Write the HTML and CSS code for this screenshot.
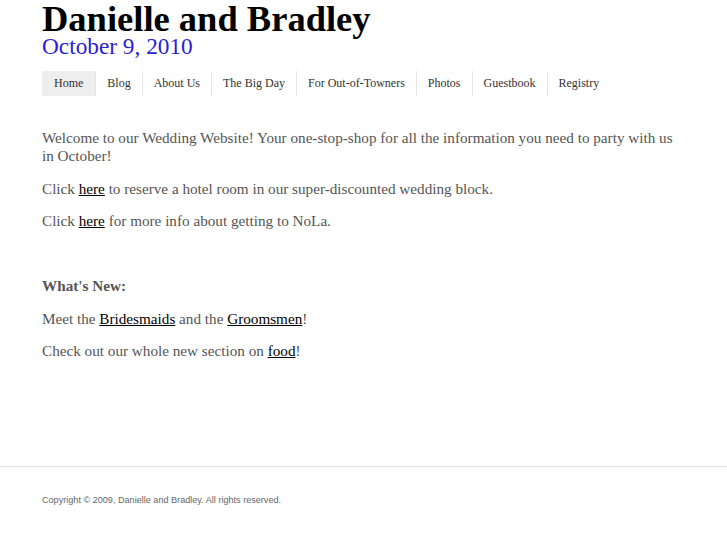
FILE: index.html
```html
<!DOCTYPE html>
<html>
<head>
<meta charset="utf-8">
<title>Danielle and Bradley</title>
<link rel="stylesheet" href="styles.css">
</head>
<body>
<div class="wrap">
  <header class="header">
    <h1 class="title">Danielle and Bradley</h1>
    <div class="date">October 9, 2010</div>
  </header>
  <nav class="nav">
    <ul class="nav-list">
      <li class="nav-item active"><a href="#">Home</a></li>
      <li class="nav-item"><a href="#">Blog</a></li>
      <li class="nav-item"><a href="#">About Us</a></li>
      <li class="nav-item"><a href="#">The Big Day</a></li>
      <li class="nav-item"><a href="#">For Out-of-Towners</a></li>
      <li class="nav-item"><a href="#">Photos</a></li>
      <li class="nav-item"><a href="#">Guestbook</a></li>
      <li class="nav-item"><a href="#">Registry</a></li>
    </ul>
  </nav>
  <main class="content">
    <p>Welcome to our Wedding Website! Your one-stop-shop for all the information you need to party with us in October!</p>
    <p>Click <a href="#">here</a> to reserve a hotel room in our super-discounted wedding block.</p>
    <p>Click <a href="#">here</a> for more info about getting to NoLa.</p>
    <p>&nbsp;</p>
    <p><strong>What's New:</strong></p>
    <p>Meet the <a href="#">Bridesmaids</a> and the <a href="#">Groomsmen</a>!</p>
    <p>Check out our whole new section on <a href="#">food</a>!</p>
  </main>
</div>
<footer class="footer">
  <p class="copyright">Copyright © 2009, Danielle and Bradley. All rights reserved.</p>
</footer>
</body>
</html>
```
FILE: styles.css
```css
html, body {
  margin: 0;
  padding: 0;
  background: #fff;
}
body {
  font-family: "Liberation Serif", "Times New Roman", serif;
  color: #555;
}
.wrap {
  padding: 0 42px;
  min-height: 466px;
  box-sizing: border-box;
}
.header {
  padding-top: 1px;
}
.title {
  margin: 0;
  font-size: 36.5px;
  line-height: 36px;
  font-weight: bold;
  color: #000;
}
.date {
  font-size: 23.3px;
  line-height: 18px;
  color: #2b1fd1;
}
.nav {
  margin-top: 16px;
}
.nav-list {
  list-style: none;
  margin: 0;
  padding: 0;
  display: flex;
}
.nav-item {
  font-size: 12px;
  line-height: 25px;
}
.nav-item + .nav-item {
  border-left: 1px solid #e6e6e6;
}
.nav-item a {
  display: block;
  padding: 0 11px;
  color: #333;
  text-decoration: none;
}
.nav-item.active a {
  background: #eee;
  padding: 0 12px 0 12px;
}
.content {
  padding-top: 33px;
  font-size: 15.2px;
  line-height: 18px;
}
.content p {
  margin: 0 0 14.5px;
}
.content a {
  color: #000;
  text-decoration: underline;
}
.content strong {
  color: #555;
}
.footer {
  border-top: 1px solid #e2e2e2;
  padding: 0 42px;
}
.copyright {
  margin: 27px 0 0;
  font-family: "Liberation Sans", Arial, sans-serif;
  font-size: 9.1px;
  line-height: 12px;
  color: #666;
}
```
